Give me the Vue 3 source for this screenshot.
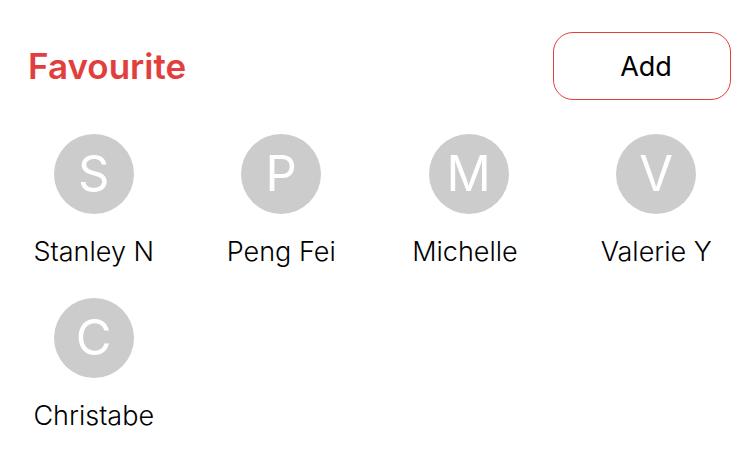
<script setup>
const contacts = ['Stanley N', 'Peng Fei', 'Michelle ', 'Valerie Y', 'Christabe']
</script>

<template>
  <main class="page">
    <header class="header">
      <h1 class="title">Favourite</h1>
      <button class="add" type="button">Add</button>
    </header>
    <ul class="grid">
      <li v-for="name in contacts" :key="name" class="contact">
        <span class="avatar">{{ name[0] }}</span>
        <span class="name">{{ name }}</span>
      </li>
    </ul>
  </main>
</template>

<style>
body {
  background: #fff;
}
</style>

<style scoped>
.page {
  font-family: Inter, "Liberation Sans", sans-serif;
  color: #000;
  padding-top: 32px;
}
.header {
  display: flex;
  align-items: center;
  justify-content: space-between;
  padding: 0 19px 0 28px;
}
.title {
  margin: 0;
  font-size: 35px;
  line-height: 44px;
  font-weight: 600;
  color: #e23e3e;
}
.add {
  box-sizing: border-box;
  width: 178px;
  height: 68px;
  padding: 0 0 0 8px;
  border: 1px solid #e23e3e;
  border-radius: 20px;
  background: #fff;
  font-family: inherit;
  font-size: 27px;
  color: #000;
}
.grid {
  display: grid;
  grid-template-columns: repeat(4, 1fr);
  row-gap: 28px;
  margin: 34px 0 0;
  padding: 0;
  list-style: none;
}
.contact {
  display: flex;
  flex-direction: column;
  align-items: center;
  gap: 20px;
}
.avatar {
  display: flex;
  align-items: center;
  justify-content: center;
  width: 80px;
  height: 80px;
  border-radius: 50%;
  background: #ccc;
  color: #fff;
  font-size: 49px;
  line-height: 80px;
}
.name {
  font-size: 27px;
  line-height: 36px;
  font-weight: 300;
  white-space: pre;
}
</style>
